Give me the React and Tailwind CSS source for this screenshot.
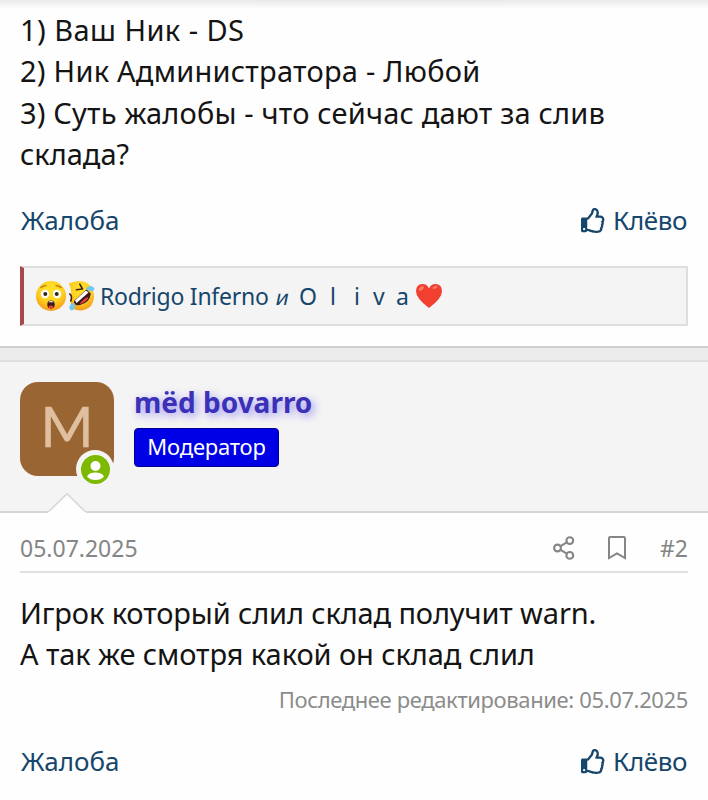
import React from 'react';
import { FaRegThumbsUp } from 'react-icons/fa';

function AstonishedFace() {
  return (
    <svg width="32" height="32" viewBox="0 0 32 32">
      <defs>
        <radialGradient id="faceYellow" cx="0.5" cy="0.3" r="0.7">
          <stop offset="0" stopColor="#ffe228" />
          <stop offset="0.6" stopColor="#fdcf20" />
          <stop offset="1" stopColor="#f79a1a" />
        </radialGradient>
      </defs>
      <circle cx="16" cy="16" r="15" fill="url(#faceYellow)" />
      <path d="M6 7.5Q8 5.6 11 5.6M26 7.5Q24 5.6 21 5.6" stroke="#b9770e" strokeWidth="1.4" strokeLinecap="round" fill="none" />
      <circle cx="10" cy="14" r="4.2" fill="#fff" />
      <circle cx="22" cy="14" r="4.2" fill="#fff" />
      <circle cx="10.3" cy="14" r="2" fill="#33241f" />
      <circle cx="21.7" cy="14" r="2" fill="#33241f" />
      <ellipse cx="16" cy="24.5" rx="3.7" ry="4" fill="#3d1a17" />
      <path d="M13.4 22.3Q16 19.8 18.6 22.3Z" fill="#fff" />
      <ellipse cx="16" cy="27" rx="2.4" ry="1.4" fill="#e8403f" />
    </svg>
  );
}

function RoflFace() {
  return (
    <svg width="30" height="32" viewBox="0 0 30 32">
      <path d="M2 3.5Q12 -1.5 20.5 3.2Q27 8 27 17Q26 29 14 30.5Q8 30.5 4.5 27.5L3.5 20Q5.5 10 2 3.5Z" fill="url(#faceYellow)" />
      <path d="M9.5 9.8L15.5 9L12.8 4.2M2.8 14Q5.6 16 3.8 21" stroke="#45250d" strokeWidth="1.6" strokeLinecap="round" strokeLinejoin="round" fill="none" />
      <path d="M19.5 9.5L23.8 13.5Q23 22.5 13 25Q6.5 26 7 21Z" fill="#3c1719" />
      <path d="M18.8 10.5L21.6 12.4L9.6 23L8 20.6Z" fill="#fff" />
      <path d="M21.6 16.8Q16 19 12.5 24.2Q20 22.5 21.6 16.8Z" fill="#e8443f" />
      <path d="M18.5 9Q21 5.4 25 6.2Q28.6 8 26.8 10.4Q24.5 12.5 18.5 9Z" fill="#73c7f2" />
      <path d="M7.3 23Q2.5 23.6 2.2 27.8Q3 31.4 6.2 30Q9.2 28 7.3 23Z" fill="#73c7f2" />
    </svg>
  );
}

function Heart() {
  return (
    <svg width="28" height="26" viewBox="0 0 28 26">
      <path d="M14 25Q1 15.5 1 8.3Q1 1.3 7.5 1Q12 1 14 5.4Q16 1 20.5 1Q27 1.3 27 8.3Q27 15.5 14 25Z" fill="#f1402f" />
      <ellipse cx="6.3" cy="5.5" rx="3" ry="1.7" transform="rotate(-38 6.3 5.5)" fill="#f77b65" />
      <ellipse cx="20" cy="4.4" rx="2.6" ry="1.3" transform="rotate(-20 20 4.4)" fill="#f77b65" />
    </svg>
  );
}

function ShareIcon() {
  return (
    <svg width="22" height="24" viewBox="0 0 22 24" fill="none" stroke="#858585" strokeWidth="2.1">
      <circle cx="4.5" cy="12" r="3.4" />
      <circle cx="16.8" cy="4.6" r="3.4" />
      <circle cx="16.8" cy="19.4" r="3.4" />
      <path d="M7.5 10.2L13.8 6.4M7.5 13.8L13.8 17.6" />
    </svg>
  );
}

function BookmarkIcon() {
  return (
    <svg width="18" height="24" viewBox="0 0 18 24" fill="none" stroke="#858585" strokeWidth="2">
      <path d="M1 22V2.2Q1 1 2.2 1H15.8Q17 1 17 2.2V22L9 17.4Z" />
    </svg>
  );
}

function PostActions() {
  return (
    <div className="flex h-[34px] items-center justify-between pl-[1px] pr-[2px] text-[26px] text-[#16466b]">
      <a href="#report">Жалоба</a>
      <a href="#like" className="flex items-center gap-[7px]">
        <FaRegThumbsUp size={25} />
        <span className="-mr-[1px] tracking-[-0.4px]">Клёво</span>
      </a>
    </div>
  );
}

function Reactions() {
  return (
    <div className="mt-[29px] flex h-[60px] items-center border-2 border-l-4 border-[#dedede] border-l-[#a8494f] bg-[#f4f4f4] pl-[11px] text-[23px] text-[#16466b]">
      <AstonishedFace />
      <RoflFace />
      <span className="ml-[3px] w-[176px] tracking-[-0.25px] whitespace-nowrap">Rodrigo Inferno</span>
      <span className="w-[23px]">
        <span className="inline-block origin-center -skew-x-12 text-[21px]">и</span>
      </span>
      <span className="flex w-[116px] whitespace-nowrap">
        <span className="w-[31px]">O</span>
        <span className="w-[24px]">l</span>
        <span className="w-[19px]">i</span>
        <span className="w-[23px]">v</span>
        <span>a</span>
      </span>
      <Heart />
    </div>
  );
}

function UserHeader() {
  return (
    <div className="relative flex h-[153px] border-y-2 border-t-[#dfdfdf] border-b-[#d6d6d6] bg-[#f4f4f4] px-5 pt-5">
      <div className="relative flex size-[94px] items-center justify-center rounded-[18px] bg-[#996633] pb-[7px] font-['Lato'] text-[57px] text-[#dfbf9f] [-webkit-text-stroke:0.6px_#dfbf9f]">
        M
        <span className="absolute top-[68px] left-[56px] flex size-[38px] items-center justify-center rounded-full bg-[#f4f4f4]">
          <svg width="29" height="29" viewBox="0 0 29 29">
            <circle cx="14.5" cy="14.5" r="14.5" fill="#7cb900" />
            <circle cx="14.5" cy="11" r="5" fill="#fff" />
            <path d="M6 21.5Q8 17.5 14.5 17.5Q21 17.5 23 21.5Q20 25 14.5 25Q9 25 6 21.5Z" fill="#fff" />
          </svg>
        </span>
      </div>
      <div className="ml-5">
        <h4 className="h-[46px] text-[28px] leading-[40px] font-bold whitespace-nowrap text-[#3a31b8] [text-shadow:3px_3px_8px_#9a90f0]">
          mëd bovarro
        </h4>
        <div className="flex h-[39px] w-[145px] items-center justify-center rounded-[4px] border border-[#000090] bg-[#0000e6] pb-[2px] text-[22px] tracking-[-0.2px] text-white">
          Модератор
        </div>
      </div>
      {/* little notch pointing at the avatar */}
      <svg className="absolute -bottom-[2px] left-[48px]" width="38" height="21" viewBox="0 0 38 21">
        <path d="M0 21V20L19 2L38 20V21Z" fill="#fefefe" />
        <path d="M0.5 19.8L19 1.8L37.5 19.8" fill="none" stroke="#d6d6d6" strokeWidth="1.6" />
      </svg>
    </div>
  );
}

export default function App() {
  return (
    <div className="h-[800px] w-[708px] overflow-hidden bg-[#fefefe] font-['Noto_Sans',sans-serif] text-[#141414]">
      <div className="h-[9px] bg-linear-to-b from-[#e9e9e9] to-[#fefefe]" />

      <article className="px-5">
        <div className="h-[194px] text-[29px] leading-[41.3px] whitespace-nowrap">
          <p className="tracking-[0.45px]">1) Ваш Ник - DS</p>
          <p className="tracking-[0.25px]">2) Ник Администратора - Любой</p>
          <p className="tracking-[0.18px]">3) Суть жалобы - что сейчас дают за слив</p>
          <p>склада?</p>
        </div>
        <PostActions />
        <Reactions />
      </article>

      <div className="mt-[20px] h-[14px] border-t-2 border-[#cfcfcf] bg-[#ebebeb]" />

      <UserHeader />

      <article className="px-5">
        <div className="flex h-[60px] items-center border-b-2 border-[#e0e0e0] pt-[12px] text-[23px] text-[#858585]">
          <span className="flex-1">05.07.2025</span>
          <ShareIcon />
          <span className="ml-[33px]"><BookmarkIcon /></span>
          <span className="ml-[34px]">#2</span>
        </div>
        <div className="mt-[19px] text-[29px] leading-[41.3px] whitespace-nowrap">
          <p className="tracking-[-0.13px]">Игрок который слил склад получит warn.</p>
          <p className="tracking-[-0.08px]">А так же смотря какой он склад слил</p>
        </div>
        <div className="mt-[7px] mb-[29px] text-right text-[22px] leading-[34px] tracking-[-0.37px] whitespace-nowrap text-[#8c8c8c]">
          Последнее редактирование: 05.07.2025
        </div>
        <PostActions />
      </article>
    </div>
  );
}
